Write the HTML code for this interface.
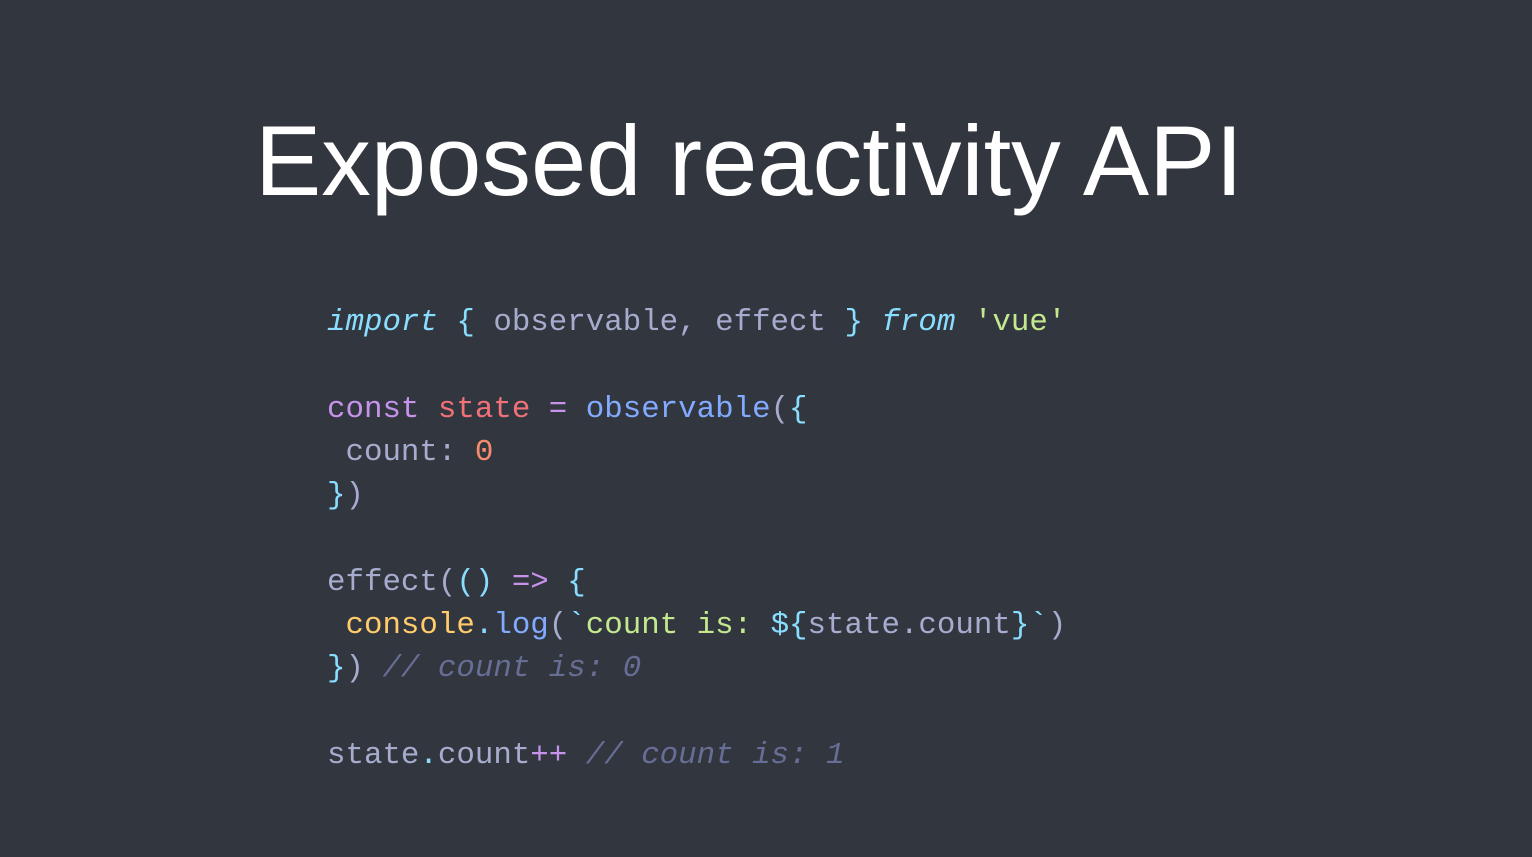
<!DOCTYPE html>
<html><head><meta charset="utf-8"><style>
html,body{margin:0;padding:0;width:1532px;height:857px;background:#32363f;overflow:hidden}
svg.t{position:absolute;left:0;top:0}
pre{position:absolute;left:327px;top:301px;margin:0;font-family:"Liberation Mono","DejaVu Sans Mono",monospace;font-size:30.8px;line-height:43.3px;color:#a6accd;white-space:pre}
.i{font-style:italic}
.c{color:#89ddff}.g{color:#c3e88d}.p{color:#c792ea}.r{color:#f07178}.b{color:#82aaff}.o{color:#f78c6c}.y{color:#ffcb6b}.m{color:#676e95;font-style:italic}
</style></head><body>
<svg class="t" width="1532" height="300"><text x="255" y="195" font-family="Liberation Sans, sans-serif" font-size="99" fill="#ffffff" textLength="988" lengthAdjust="spacingAndGlyphs">Exposed reactivity API</text></svg>
<pre><span class="c i">import</span> <span class="c">{</span> observable, effect <span class="c">}</span> <span class="c i">from</span> <span class="g">'vue'</span>

<span class="p">const</span> <span class="r">state</span> <span class="p">=</span> <span class="b">observable</span>(<span class="c">{</span>
 count: <span class="o">0</span>
<span class="c">}</span>)

effect(<span class="c">()</span> <span class="p">=&gt;</span> <span class="c">{</span>
 <span class="y">console</span><span class="c">.</span><span class="b">log</span>(<span class="c">`</span><span class="g">count is: </span><span class="c">${</span>state.count<span class="c">}`</span>)
<span class="c">}</span>) <span class="m">// count is: 0</span>

state<span class="c">.</span>count<span class="p">++</span> <span class="m">// count is: 1</span></pre>
</body></html>
